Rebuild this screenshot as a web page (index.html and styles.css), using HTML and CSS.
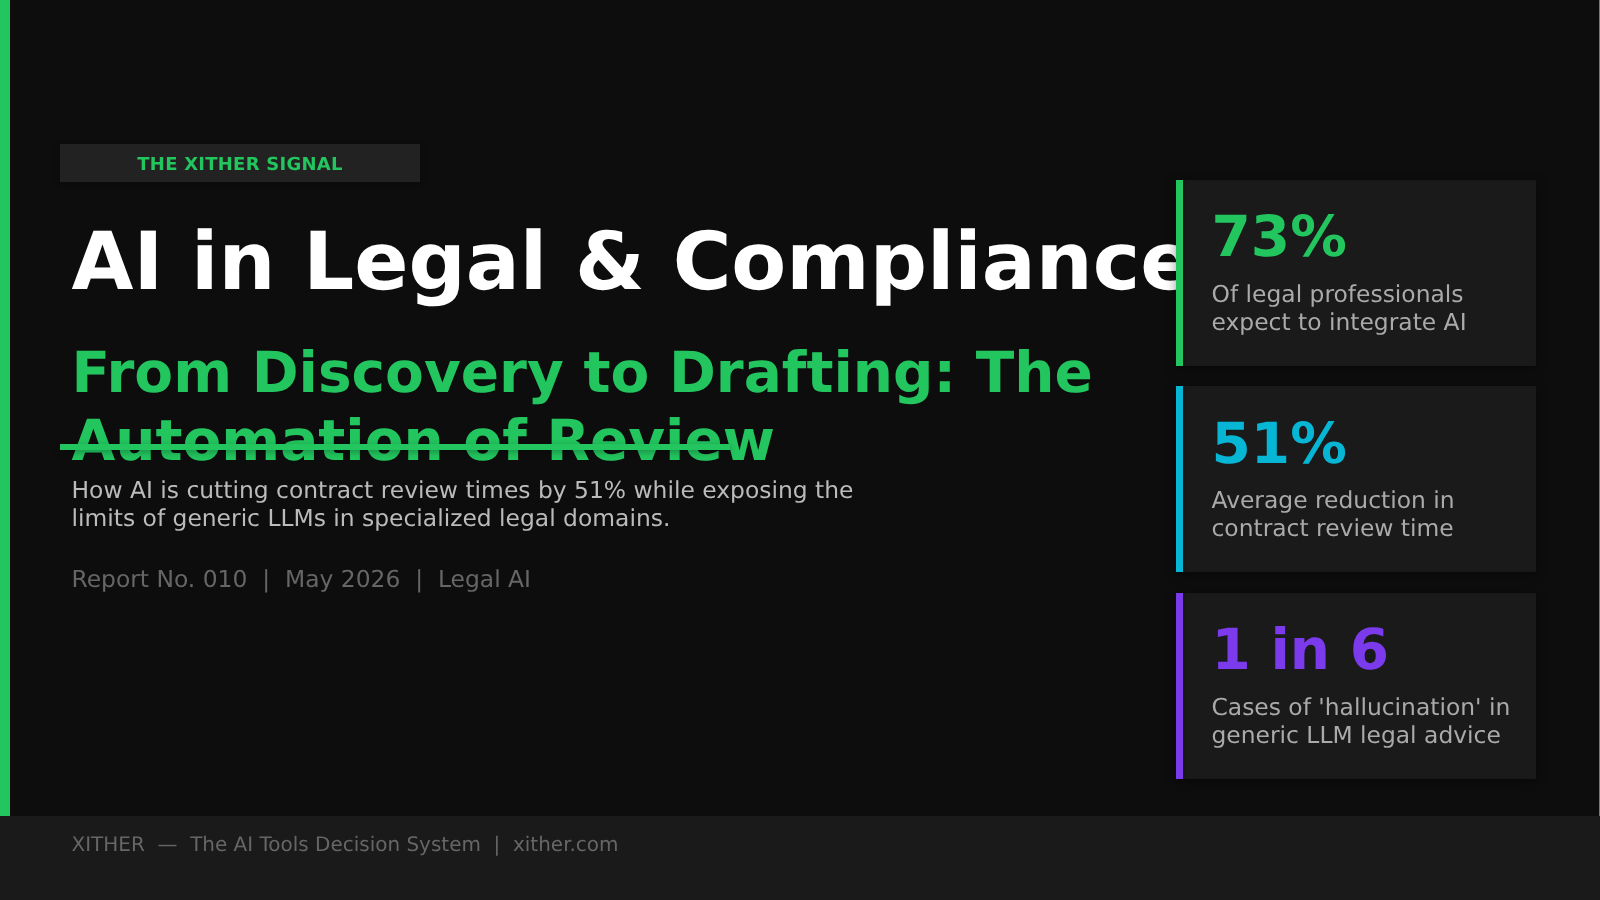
FILE: index.html
```html
<!DOCTYPE html>
<html lang="en">
<head>
    <meta charset="UTF-8">
    <title>The Xither Signal - AI in Legal & Compliance</title>
    <link rel="stylesheet" href="styles.css">
</head>
<body>
    <main class="slide">
        <section class="intro">
            <div class="badge">THE XITHER SIGNAL</div>
            <h1>AI in Legal &amp; Compliance</h1>
            <h2>From Discovery to Drafting: The<br>Automation of Review</h2>
            <div class="strike"></div>
            <p class="desc">How AI is cutting contract review times by 51% while exposing the<br>limits of generic LLMs in specialized legal domains.</p>
            <p class="meta">Report No. 010&nbsp; |&nbsp; May 2026&nbsp; |&nbsp; Legal AI</p>
        </section>
        <aside class="stats">
            <div class="card green">
                <div class="num">73%</div>
                <div class="label">Of legal professionals<br>expect to integrate AI</div>
            </div>
            <div class="card blue">
                <div class="num">51%</div>
                <div class="label">Average reduction in<br>contract review time</div>
            </div>
            <div class="card purple">
                <div class="num">1 in 6</div>
                <div class="label">Cases of 'hallucination' in<br>generic LLM legal advice</div>
            </div>
        </aside>
    </main>
    <footer class="footer">XITHER&nbsp; —&nbsp; The AI Tools Decision System&nbsp; |&nbsp; xither.com</footer>
</body>
</html>
```

FILE: styles.css
```css
html, body {
    margin: 0;
    height: 100%;
}

html {
    background: #0d0d0d;
}

body {
    width: 1600px;
    height: 900px;
    overflow: hidden;
    font-family: "DejaVu Sans", sans-serif;
    text-rendering: geometricPrecision;
    will-change: transform;
}

.slide {
    display: flex;
    justify-content: space-between;
    box-sizing: border-box;
    height: 816px;
    border-left: 10px solid #22c55e;
    border-right: 1px solid #777;
    padding: 144px 63px 0 50px;
}

.intro {
    position: relative;
    flex: 0 0 1100px;
    min-width: 0;
    white-space: nowrap;
}

.badge {
    width: 360px;
    height: 38px;
    line-height: 41px;
    background: #222;
    color: #22c55e;
    font-size: 18px;
    font-weight: bold;
    letter-spacing: 0.25px;
    text-align: center;
    box-shadow: 0 2px 6px rgba(0, 0, 0, 0.3);
}

h1 {
    margin: 32px 0 0 11.5px;
    color: #fff;
    font-size: 80px;
    line-height: 96px;
}

h2 {
    margin: 29.5px 0 0 11.5px;
    color: #22c55e;
    font-size: 56.5px;
    line-height: 68.5px;
}

.strike {
    position: absolute;
    left: 0;
    top: 300px;
    width: 670px;
    height: 6px;
    background: #22c55e;
    box-shadow: 0 2px 6px rgba(0, 0, 0, 0.3);
}

.desc {
    margin: -1px 0 0 11.5px;
    color: #bbb;
    font-size: 23.4px;
    line-height: 28px;
}

.meta {
    margin: 33px 0 0 11.5px;
    color: #666;
    font-size: 23.4px;
    line-height: 28px;
}

.stats {
    position: relative;
    display: flex;
    flex-direction: column;
    gap: 20.5px;
    flex: 0 0 360px;
    margin-top: 35.9px;
}

.card {
    box-sizing: border-box;
    height: 186px;
    padding: 25.6px 20px 0 28.5px;
    background: #1a1a1a;
    border-left: 7px solid;
    box-shadow: 0 2px 10px rgba(0, 0, 0, 0.4), inset 3px 0 3px -1px rgba(0, 0, 0, 0.15);
}

.green { border-color: #22c55e; }
.blue { border-color: #06b6d4; }
.purple { border-color: #7c3aed; }

.num {
    font-size: 56.5px;
    line-height: 66px;
    font-weight: bold;
}

.green .num { color: #22c55e; }
.blue .num { color: #06b6d4; }
.purple .num { color: #7c3aed; }

.label {
    margin-top: 8.5px;
    color: #aaa;
    font-size: 23.4px;
    line-height: 28px;
}

.footer {
    box-sizing: border-box;
    height: 84px;
    padding: 16px 0 0 71.5px;
    background: #1a1a1a;
    color: #666;
    font-size: 19.98px;
    line-height: 24px;
}
```
